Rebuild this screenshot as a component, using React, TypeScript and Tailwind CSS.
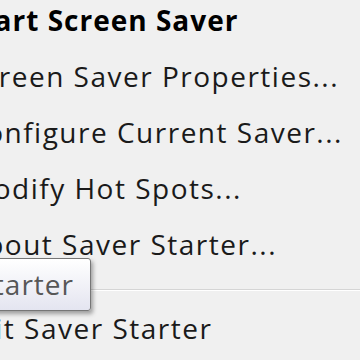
import React from "react";

const items = [
  { label: "Start Screen Saver", bold: true },
  { label: "Screen Saver Properties..." },
  { label: "Configure Current Saver..." },
  { label: "Modify Hot Spots..." },
  { label: "About Saver Starter..." },
];

export default function App() {
  return (
    <div
      className="relative w-[360px] h-[360px] overflow-hidden bg-[#f0f0f0] text-[#1a1a1a]"
      style={{ fontFamily: '"Open Sans", "Noto Sans", sans-serif' }}
    >
      <div className="-ml-[33px] -mt-[8px] flex flex-col text-[28px] tracking-[1.5px]">
        {items.map((it) => (
          <div
            key={it.label}
            className={
              "h-[56px] leading-[56px] whitespace-nowrap " +
              (it.bold ? "font-bold text-black tracking-[1px] -ml-[2px]" : "")
            }
          >
            {it.label}
          </div>
        ))}
        <div className="h-[28px] pt-[17px]">
          <div className="h-px bg-[#d5d5d5]" />
          <div className="h-px bg-white" />
        </div>
        <div className="h-[56px] leading-[56px] whitespace-nowrap -ml-[5px]">Exit Saver Starter</div>
      </div>

      <div className="absolute top-[258px] right-[269px] h-[53px] rounded-[3px] border border-[#767676] bg-gradient-to-b from-white to-[#e4e5f0] shadow-[2px_3px_4px_rgba(0,0,0,0.35)] pl-[10px] pr-[16px] text-[28px] tracking-[1px] leading-[51px] whitespace-nowrap text-[#575757]">
        Saver Starter
      </div>
    </div>
  );
}
